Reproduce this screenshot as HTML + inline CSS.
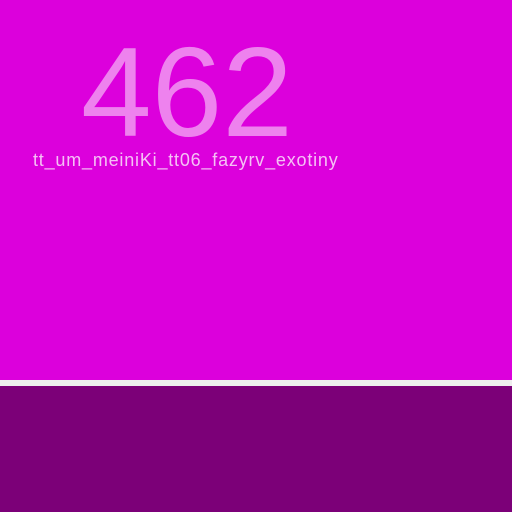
<html><head><style>
body{margin:0;width:512px;height:512px;background:#dc00dc;position:relative;overflow:hidden;font-family:"Liberation Sans",sans-serif}
.n{position:absolute;left:81px;top:20px;font-size:127px;line-height:145px;color:#ee82ee}
.s{position:absolute;left:33px;top:149px;font-size:18px;line-height:22px;color:#f5c0f5;letter-spacing:0.8px}
.l{position:absolute;left:0;top:380px;width:512px;height:6px;background:#eee}
.b{position:absolute;left:0;top:386px;width:512px;height:126px;background:#7c0078}
</style></head><body>
<div class="n">462</div>
<div class="s">tt_um_meiniKi_tt06_fazyrv_exotiny</div>
<div class="l"></div><div class="b"></div>
</body></html>
